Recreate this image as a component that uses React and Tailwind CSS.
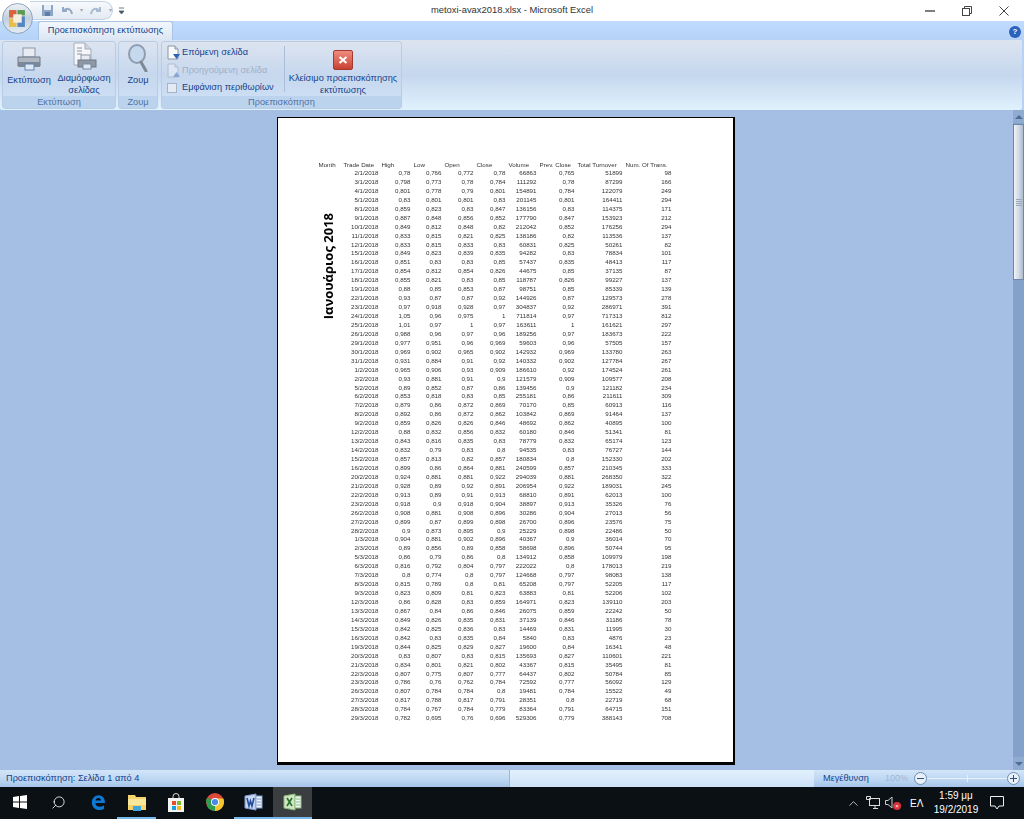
import { ChevronUp, Search } from 'lucide-react';

const rowsText = `2/1/2018 0,78 0,766 0,772 0,78 66863 0,765 51899 98
3/1/2018 0,798 0,773 0,78 0,784 111292 0,78 87299 166
4/1/2018 0,801 0,778 0,79 0,801 154891 0,784 122079 249
5/1/2018 0,83 0,801 0,801 0,83 201145 0,801 164411 294
8/1/2018 0,859 0,823 0,83 0,847 136156 0,83 114375 171
9/1/2018 0,887 0,848 0,856 0,852 177790 0,847 153923 212
10/1/2018 0,849 0,812 0,848 0,82 212042 0,852 176256 294
11/1/2018 0,833 0,815 0,821 0,825 138186 0,82 113536 137
12/1/2018 0,833 0,815 0,833 0,83 60831 0,825 50261 82
15/1/2018 0,849 0,823 0,839 0,835 94282 0,83 78834 101
16/1/2018 0,851 0,83 0,83 0,85 57437 0,835 48413 117
17/1/2018 0,854 0,812 0,854 0,826 44675 0,85 37135 87
18/1/2018 0,855 0,821 0,83 0,85 118787 0,826 99227 137
19/1/2018 0,88 0,85 0,853 0,87 98751 0,85 85339 139
22/1/2018 0,93 0,87 0,87 0,92 144926 0,87 129573 278
23/1/2018 0,97 0,918 0,928 0,97 304837 0,92 286971 391
24/1/2018 1,05 0,96 0,975 1 711814 0,97 717313 812
25/1/2018 1,01 0,97 1 0,97 163611 1 161621 297
26/1/2018 0,988 0,96 0,97 0,96 189256 0,97 183673 222
29/1/2018 0,977 0,951 0,96 0,969 59603 0,96 57505 157
30/1/2018 0,969 0,902 0,965 0,902 142932 0,969 133780 263
31/1/2018 0,931 0,884 0,91 0,92 140332 0,902 127784 267
1/2/2018 0,965 0,906 0,93 0,909 186610 0,92 174524 261
2/2/2018 0,93 0,881 0,91 0,9 121579 0,909 109577 208
5/2/2018 0,89 0,852 0,87 0,86 139456 0,9 121182 234
6/2/2018 0,853 0,818 0,83 0,85 255181 0,86 211611 309
7/2/2018 0,879 0,86 0,872 0,869 70170 0,85 60913 116
8/2/2018 0,892 0,86 0,872 0,862 103842 0,869 91464 137
9/2/2018 0,859 0,826 0,826 0,846 48692 0,862 40895 100
12/2/2018 0,88 0,832 0,856 0,832 60180 0,846 51341 81
13/2/2018 0,843 0,816 0,835 0,83 78779 0,832 65174 123
14/2/2018 0,832 0,79 0,83 0,8 94535 0,83 76727 144
15/2/2018 0,857 0,813 0,82 0,857 180834 0,8 152330 202
16/2/2018 0,899 0,86 0,864 0,881 240599 0,857 210345 333
20/2/2018 0,924 0,881 0,881 0,922 294039 0,881 268350 322
21/2/2018 0,928 0,89 0,92 0,891 206954 0,922 189031 245
22/2/2018 0,913 0,89 0,91 0,913 68810 0,891 62013 100
23/2/2018 0,918 0,9 0,918 0,904 38897 0,913 35326 76
26/2/2018 0,908 0,881 0,908 0,896 30286 0,904 27013 56
27/2/2018 0,899 0,87 0,899 0,898 26700 0,896 23576 75
28/2/2018 0,9 0,873 0,895 0,9 25229 0,898 22486 50
1/3/2018 0,904 0,881 0,902 0,896 40367 0,9 36014 70
2/3/2018 0,89 0,856 0,89 0,858 58698 0,896 50744 95
5/3/2018 0,86 0,79 0,86 0,8 134912 0,858 109979 198
6/3/2018 0,816 0,792 0,804 0,797 222022 0,8 178013 219
7/3/2018 0,8 0,774 0,8 0,797 124668 0,797 98083 138
8/3/2018 0,815 0,789 0,8 0,81 65208 0,797 52205 117
9/3/2018 0,823 0,809 0,81 0,823 63883 0,81 52206 102
12/3/2018 0,86 0,828 0,83 0,859 164971 0,823 139110 203
13/3/2018 0,867 0,84 0,86 0,846 26075 0,859 22242 50
14/3/2018 0,849 0,826 0,835 0,831 37139 0,846 31186 78
15/3/2018 0,842 0,825 0,836 0,83 14469 0,831 11995 30
16/3/2018 0,842 0,83 0,835 0,84 5840 0,83 4876 23
19/3/2018 0,844 0,825 0,829 0,827 19600 0,84 16341 48
20/3/2018 0,83 0,807 0,83 0,815 135693 0,827 110601 221
21/3/2018 0,834 0,801 0,821 0,802 43367 0,815 35495 81
22/3/2018 0,807 0,775 0,807 0,777 64437 0,802 50784 85
23/3/2018 0,786 0,76 0,762 0,784 72592 0,777 56092 129
26/3/2018 0,807 0,784 0,784 0,8 19481 0,784 15522 49
27/3/2018 0,817 0,788 0,817 0,791 28351 0,8 22719 68
28/3/2018 0,784 0,767 0,784 0,779 83364 0,791 64715 151
29/3/2018 0,782 0,695 0,76 0,696 529306 0,779 388143 708`;

const rows = rowsText.split('\n').map((line) => line.split(' '));
const headers = ['Trade Date', 'High', 'Low', 'Open', 'Close', 'Volume', 'Prev. Close', 'Total Turnover', 'Num. Of Trans.'];
const cols = 'grid grid-cols-[38px_32px_31px_32px_32px_31px_38px_48px_49px]';

const PrinterIcon = () => (
  <svg width="26" height="26" viewBox="0 0 26 26">
    <rect x="7" y="2" width="12" height="9" fill="#e8ecf2" stroke="#8d97a5" />
    <path d="M2 11h22v9H2z" fill="#aeb6c1" stroke="#6f7988" />
    <rect x="2" y="16" width="22" height="5" fill="#7d8896" />
    <rect x="9" y="18" width="9" height="6" fill="#dfe9f5" stroke="#5f83b3" />
  </svg>
);

const SetupIcon = () => (
  <svg width="26" height="28" viewBox="0 0 26 28">
    <path d="M3 1h11l6 6v16H3z" fill="#f4f6f9" stroke="#a5adb8" />
    <path d="M14 1v6h6" fill="#cfd6df" stroke="#a5adb8" />
    <path d="M6 6h5M6 9h5M6 12h5" stroke="#8a94a2" />
    <rect x="10" y="13" width="9" height="6" fill="#e8ecf2" stroke="#8d97a5" />
    <rect x="7" y="18" width="18" height="7" fill="#8e98a5" stroke="#6f7988" />
    <rect x="12" y="22" width="8" height="5" fill="#dfe9f5" stroke="#7c8a9c" />
  </svg>
);

const ZoomIcon = () => (
  <svg width="22" height="28" viewBox="0 0 22 28">
    <ellipse cx="10" cy="10" rx="8" ry="9" fill="#c5d8ee" stroke="#8e9db0" strokeWidth="2" />
    <path d="M14 18l5 9" stroke="#7f8894" strokeWidth="3" strokeLinecap="round" />
  </svg>
);

const PageIcon = ({ disabled, down }) => (
  <svg width="15" height="15" viewBox="0 0 15 15" className={disabled ? 'opacity-40' : ''}>
    <path d="M2 1h7l3 3v10H2z" fill="#f8fafc" stroke="#8a94a2" />
    <path d="M9 1v3h3" fill="#d5dbe3" stroke="#8a94a2" />
    <path d={down ? 'M7 9h7l-3.500 5z' : 'M7 14h7l-3.500-5z'} fill="#2b62b5" />
  </svg>
);

const CloseIcon = () => (
  <div className="flex h-[20px] w-[20px] items-center justify-center rounded-[2px] border border-[#a33a32] bg-gradient-to-b from-[#ee8c7e] to-[#c93f32]">
    <svg width="10" height="8" viewBox="0 0 10 8">
      <path d="M1.500 1l7 6M8.500 1l-7 6" stroke="#fff" strokeWidth="2" />
    </svg>
  </div>
);

const OfficeButton = () => (
  <div className="absolute left-[2px] top-[3px] z-10 flex h-[31px] w-[31px] items-center justify-center rounded-full border border-[#8ea3bd] bg-gradient-to-b from-[#eef2f6] via-[#c3cfdc] to-[#e4edf4]">
    <svg width="19" height="19" viewBox="0 0 18 18">
      <rect x="1" y="1" width="7" height="7" fill="#d9623b" />
      <rect x="9" y="1" width="7" height="5" fill="#5b9a52" />
      <rect x="1" y="9" width="7" height="8" fill="#e8bd4a" />
      <rect x="9" y="7" width="7" height="10" fill="#5585c2" />
      <rect x="5" y="5" width="8" height="8" fill="#f3eedd" />
    </svg>
  </div>
);

const QuickAccess = () => (
  <div className="ml-[30px] flex h-[20px] items-center">
    <div className="flex h-[19px] w-[83px] items-center gap-[6px] rounded-r-full border-y border-r border-[#c3d2e4] bg-gradient-to-b from-[#f7f9fc] to-[#e3eaf3] pl-[11px]">
      <svg width="13" height="13" viewBox="0 0 13 13">
        <path d="M1 1h11v11H1z" fill="#8ea6c6" />
        <rect x="3" y="1" width="7" height="5" fill="#e6edf5" />
        <rect x="4" y="8" width="5" height="4" fill="#5f7ea6" />
      </svg>
      <svg width="14" height="12" viewBox="0 0 14 12" fill="none">
        <path d="M3 2v4h4M3.500 6C6 2.500 11 3 12 9" stroke="#93a9c4" strokeWidth="2" />
      </svg>
      <span className="text-[6px] text-[#9aaabc]">▾</span>
      <svg width="14" height="12" viewBox="0 0 14 12" fill="none">
        <path d="M11 2v4H7M10.500 6C8 2.500 3 3 2 9" stroke="#a9bbd1" strokeWidth="2" />
      </svg>
      <span className="text-[6px] text-[#9aaabc]">▾</span>
    </div>
    <svg width="7" height="8" viewBox="0 0 7 8" className="ml-[5px]">
      <path d="M1 1h5M1 4h5l-2.500 3z" fill="#48586c" stroke="#48586c" strokeWidth="0.8" />
    </svg>
  </div>
);

const RibbonGroup = ({ width, label, children }) => (
  <div className={`flex h-[68px] flex-col rounded-[3px] border border-[#b7cde6] bg-gradient-to-b from-[#dde4f0] via-[#c6d7ee] to-[#cfe2f6] ${width}`}>
    <div className="flex min-h-0 flex-1">{children}</div>
    <div className="flex h-[12px] items-center justify-center bg-[#bcd3ee] pt-px text-[9.200px] leading-none text-[#4d72a5]">{label}</div>
  </div>
);

const BigButton = ({ width, icon, children }) => (
  <div className={`flex flex-col items-center text-center text-[9.200px] leading-[12px] text-[#15428b] ${width}`}>
    <div className="flex h-[30px] items-end">{icon}</div>
    <div className="mt-[2px]">{children}</div>
  </div>
);

const Ribbon = () => (
  <div className="bg-[#b6d2f6] pr-[2px]">
    <div className="flex h-[70px] items-center gap-[2px] rounded-b-[3px] bg-gradient-to-b from-[#dde4f0] via-[#c5d7ee] to-[#e0f2fd] pl-[2px]">
      <RibbonGroup width="w-[114px]" label="Εκτύπωση">
        <BigButton width="w-[52px]" icon={<PrinterIcon />}>Εκτύπωση</BigButton>
        <BigButton width="w-[58px]" icon={<SetupIcon />}>Διαμόρφωση σελίδας</BigButton>
      </RibbonGroup>
      <RibbonGroup width="w-[40px]" label="Ζουμ">
        <BigButton width="w-[38px]" icon={<ZoomIcon />}>Ζουμ</BigButton>
      </RibbonGroup>
      <div className="ml-px">
        <RibbonGroup width="w-[241px]" label="Προεπισκόπηση">
          <div className="flex w-[122px] flex-col gap-[3px] pl-[4px] pt-[3px] text-[9.200px] leading-[13px] text-[#15428b]">
            <div className="flex items-center gap-[1px]"><PageIcon down />Επόμενη σελίδα</div>
            <div className="flex items-center gap-[1px] text-[#9fb0c6]"><PageIcon disabled />Προηγούμενη σελίδα</div>
            <div className="flex items-center gap-[5px]">
              <span className="ml-[1px] h-[10px] w-[10px] border border-[#a4b4c8] bg-[#e4ebf4]" />
              Εμφάνιση περιθωρίων
            </div>
          </div>
          <div className="my-[4px] w-px bg-[#a9bed8]" />
          <BigButton width="flex-1" icon={<CloseIcon />}>Κλείσιμο προεπισκόπησης εκτύπωσης</BigButton>
        </RibbonGroup>
      </div>
    </div>
  </div>
);

const Sheet = () => (
  <div className="h-[648px] w-[458px] border border-black border-b-[3px] border-r-[2px] bg-white pl-[41px] pt-[42px] font-['Liberation_Sans',sans-serif] text-[6.200px] text-[#333] blur-[0.3px]">
    <div className="flex h-[9px] items-center leading-[9px]">
      <div className="w-[24px]">Month</div>
      <div className={cols}>
        {headers.map((h) => (
          <div key={h} className="whitespace-nowrap pl-px">{h}</div>
        ))}
      </div>
    </div>
    <div className="flex">
      <div className="flex w-[24px] justify-center pr-[4px] pt-[44px]">
        <div className="h-fit rotate-180 whitespace-nowrap text-[13px] font-bold leading-none text-black [writing-mode:vertical-rl] font-['Open_Sans',sans-serif]">
          Ιανουάριος 2018
        </div>
      </div>
      <div>
        {rows.map((row) => (
          <div key={row[0]} className={`${cols} h-[8.950px] items-center leading-[8.950px]`}>
            {row.map((cell, i) => (
              <div key={i} className="pr-[2px] text-right">{cell}</div>
            ))}
          </div>
        ))}
      </div>
    </div>
  </div>
);

const Scrollbar = () => (
  <div className="flex w-[11px] flex-col bg-[#83a1ca]">
    <div className="flex h-[13px] items-center justify-center bg-[#8fabd0]">
      <div className="h-0 w-0 border-x-[4px] border-b-[4px] border-x-transparent border-b-[#4e6d96]" />
    </div>
    <div className="mt-px flex h-[156px] flex-col items-center justify-center gap-px border border-[#6f87a8] bg-gradient-to-r from-[#f1f3f6] via-[#d3dbe6] to-[#aebccf]">
      <div className="h-px w-[6px] bg-[#9aa7b8]" />
      <div className="h-px w-[6px] bg-[#9aa7b8]" />
      <div className="h-px w-[6px] bg-[#9aa7b8]" />
      <div className="h-px w-[6px] bg-[#9aa7b8]" />
    </div>
    <div className="flex-1" />
    <div className="flex h-[13px] items-center justify-center bg-[#8fabd0]">
      <div className="h-0 w-0 border-x-[4px] border-t-[4px] border-x-transparent border-t-[#4e6d96]" />
    </div>
  </div>
);

const StatusBar = () => (
  <div className="flex h-[17px] bg-gradient-to-b from-[#d3e5f8] via-[#c0d8f3] to-[#a6c5ea] text-[9.200px] leading-[17px] text-[#15428b]">
    <div className="w-[510px] border-r border-[#9db8d9] pl-[6px]">Προεπισκόπηση: Σελίδα 1 από 4</div>
    <div className="w-[304px] bg-gradient-to-b from-[#e2f0fc] to-[#cde2f7]" />
    <div className="flex flex-1 items-center pl-[9px]">
      <span className="w-[62px]">Μεγέθυνση</span>
      <span className="w-[29px] text-[9px] text-[#9db6d4]">100%</span>
      <div className="flex h-[13px] w-[13px] items-center justify-center rounded-full border border-[#6e8db5] bg-[#e8f0f9]">
        <div className="h-px w-[7px] bg-[#33507a]" />
      </div>
      <div className="relative h-px w-[80px] bg-[#e7eff8]">
        <div className="absolute left-[40px] top-[-3px] h-[7px] w-px bg-[#e7eff8]" />
      </div>
      <div className="relative flex h-[13px] w-[13px] items-center justify-center rounded-full border border-[#6e8db5] bg-[#e8f0f9]">
        <div className="h-px w-[7px] bg-[#33507a]" />
        <div className="absolute h-[7px] w-px bg-[#33507a]" />
      </div>
    </div>
  </div>
);

const WinLogo = () => (
  <svg width="14" height="14" viewBox="0 0 14 14" fill="#fff">
    <path d="M0 2l6-.900V6.500H0zM7 1l7-1v6.500H7zM0 7.500h6v5.400l-6-.900zM7 7.500h7V14l-7-1z" />
  </svg>
);

const EdgeIcon = () => (
  <svg width="18" height="18" viewBox="0 0 18 18" fill="none">
    <path d="M3 11C2 5 7 1.500 11 2.500c3.500.800 5 4 5 7.500H6.500c0 4 5 5 8.500 2.500v3.500c-5 2.500-11 .500-12-5z" fill="#0c79d6" />
    <path d="M6.500 7.500h5.500C12 4.500 7.500 4 6.500 7.500z" fill="#050a10" />
  </svg>
);

const ExplorerIcon = () => (
  <svg width="18" height="17" viewBox="0 0 18 17">
    <path d="M0 1h7l1 2h10v13H0z" fill="#f6d469" />
    <rect x="0" y="5" width="18" height="6" fill="#fbe79b" />
    <rect x="5" y="12" width="8" height="5" fill="#3fa6df" />
  </svg>
);

const StoreIcon = () => (
  <svg width="18" height="19" viewBox="0 0 18 19" fill="none">
    <path d="M6 5V3.500a3 3 0 016 0V5" stroke="#ddd" />
    <rect x="1" y="5" width="16" height="14" fill="#f3f3f3" />
    <rect x="5" y="8" width="4" height="4" fill="#e2502a" />
    <rect x="10" y="8" width="4" height="4" fill="#7fba2a" />
    <rect x="5" y="13" width="4" height="4" fill="#17a0e0" />
    <rect x="10" y="13" width="4" height="4" fill="#f5b91a" />
  </svg>
);

const ChromeIcon = () => (
  <svg width="18" height="18" viewBox="0 0 18 18">
    <circle cx="9" cy="9" r="9" fill="#dd4a3c" />
    <path d="M9 9L1.600 14A9 9 0 000 9c0-1 .200-3 1.500-4.500z" fill="#2f9d4f" />
    <path d="M9 9l-7.800 4.600A9 9 0 009 18z" fill="#2f9d4f" />
    <path d="M9 9v9a9 9 0 008.300-12.500H9z" fill="#f5c52d" />
    <circle cx="9" cy="9" r="4" fill="#fff" />
    <circle cx="9" cy="9" r="3.100" fill="#4a89e8" />
  </svg>
);

const OfficeDocIcon = ({ letter, fill, line, text }) => (
  <svg width="19" height="18" viewBox="0 0 19 18">
    <path d="M1 3l11-2v16L1 15z" fill={fill} stroke={line} />
    <rect x="12" y="3" width="6" height="12" fill="#eef3f6" stroke={line} />
    <path d="M13 6h4M13 9h4M13 12h4" stroke={line} />
    <path d={letter === 'X' ? 'M4 5l5 8M9 5l-5 8' : 'M3 5l2 8 1.500-5 1.500 5 2-8'} fill="none" stroke={text} strokeWidth="1.600" />
  </svg>
);

const taskApps = [
  { id: 'start', icon: <WinLogo /> },
  { id: 'search', icon: <Search size={15} strokeWidth={1.300} className="-scale-x-100 text-white" /> },
  { id: 'edge', icon: <EdgeIcon /> },
  { id: 'files', icon: <ExplorerIcon />, open: true },
  { id: 'store', icon: <StoreIcon /> },
  { id: 'chrome', icon: <ChromeIcon /> },
  { id: 'word', icon: <OfficeDocIcon letter="W" fill="#c7d6ef" line="#7f9cd0" text="#234e9e" />, open: true },
  { id: 'excel', icon: <OfficeDocIcon letter="X" fill="#cfe6c5" line="#8dba7e" text="#2c6f2c" />, open: true, active: true },
];

const Taskbar = () => (
  <div className="flex h-[32px] items-stretch justify-between bg-[#0b1014] font-['Liberation_Sans',sans-serif] text-white">
    <div className="flex">
      {taskApps.map((app) => (
        <div
          key={app.id}
          className={`flex w-[39px] items-center justify-center border-b-2 ${app.open ? 'border-[#76b9ed]' : 'border-transparent'} ${app.active ? 'bg-[#3b3e40]' : ''}`}
        >
          {app.icon}
        </div>
      ))}
    </div>
    <div className="flex items-center">
      <ChevronUp size={15} strokeWidth={1.300} className="text-[#ddd]" />
      <svg width="14" height="14" viewBox="0 0 14 14" fill="none" stroke="#ddd" className="ml-[5px]">
        <rect x="3.500" y="2.500" width="10" height="7" />
        <path d="M7 12.500h5M9 10v2M.5.500h4v3h-4z" />
      </svg>
      <div className="relative ml-[5px] h-[14px] w-[14px]">
        <svg width="10" height="13" viewBox="0 0 10 13" fill="none" stroke="#ccc">
          <path d="M.5 4.500h2.500L7 1v11L3 8.500H.5z" />
        </svg>
        <div className="absolute bottom-0 right-[-2px] flex h-[8px] w-[8px] items-center justify-center rounded-full bg-[#d9303c] text-[6px] leading-none text-white">×</div>
      </div>
      <div className="ml-[11px] w-[14px] text-[10px]">ΕΛ</div>
      <div className="ml-[9px] w-[46px] text-center text-[10px] leading-[14px]">
        <div>1:59 μμ</div>
        <div>19/2/2019</div>
      </div>
      <svg width="15" height="14" viewBox="0 0 15 14" fill="none" stroke="#eee" className="ml-[11px] mr-[19px]">
        <path d="M.5.500h13v9.500H9l-2 3-2-3H.5z" />
      </svg>
    </div>
  </div>
);

export default function App() {
  return (
    <div className="relative flex h-[819px] w-[1024px] flex-col overflow-hidden bg-[#a4bfe3] font-['Liberation_Sans',sans-serif]">
      <OfficeButton />
      <div className="grid h-[21px] grid-cols-[1fr_auto_1fr] items-center bg-white text-[#333]">
        <QuickAccess />
        <div className="text-[9.400px]">metoxi-avax2018.xlsx - Microsoft Excel</div>
        <div className="flex items-center justify-end">
          <svg width="10" height="10" viewBox="0 0 10 10" className="mr-[27px]"><path d="M0 5h10" stroke="#555" strokeWidth="1.500" /></svg>
          <svg width="10" height="10" viewBox="0 0 10 10" fill="none" stroke="#444" className="mr-[27px]"><rect x="0.500" y="2.500" width="7" height="7" /><path d="M2.500 2.500v-2h7v7h-2" /></svg>
          <svg width="10" height="10" viewBox="0 0 10 10" stroke="#444" className="mr-[15px]"><path d="M.5.5l9 9M9.500.5l-9 9" /></svg>
        </div>
      </div>
      <div className="flex h-[19px] items-end justify-between bg-gradient-to-b from-[#bfdbff] to-[#b6d2f6] pl-[38px] pr-[3px]">
        <div className="flex h-[19px] w-[135px] items-center justify-center rounded-t-[3px] border-x border-t border-[#a9c3e3] bg-gradient-to-b from-[#f2f7fc] to-[#dce6f3] text-[9.200px] text-[#15428b]">
          Προεπισκόπηση εκτύπωσης
        </div>
        <div className="mb-[2px] flex h-[12px] w-[12px] items-center justify-center rounded-full bg-[#2a62bd] text-[8px] font-bold leading-none text-white">?</div>
      </div>
      <Ribbon />
      <div className="flex min-h-0 flex-1">
        <div className="flex flex-1 justify-center pr-[2px] pt-[7px]">
          <Sheet />
        </div>
        <Scrollbar />
      </div>
      <StatusBar />
      <Taskbar />
    </div>
  );
}
